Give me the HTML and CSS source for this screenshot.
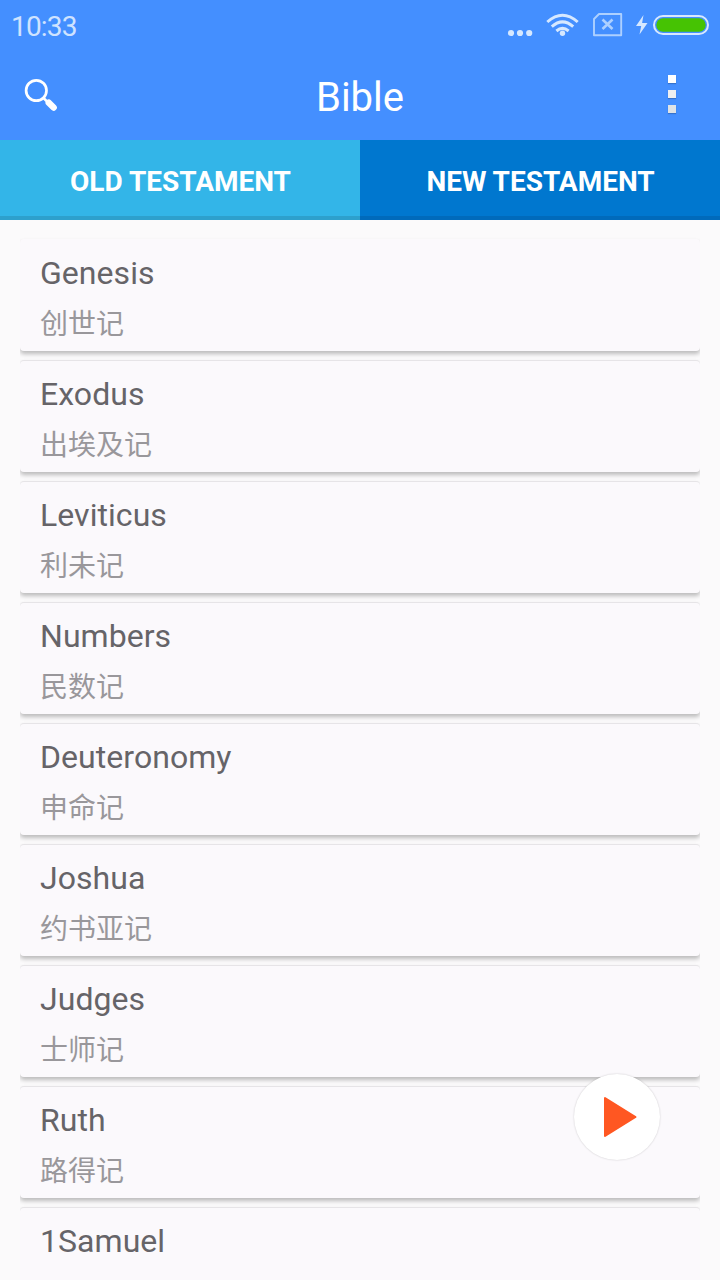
FILE: index.html
```html
<!DOCTYPE html>
<html lang="en">
<head>
<meta charset="utf-8">
<title>Bible</title>
<link rel="stylesheet" href="styles.css">
</head>
<body>
<div class="screen">
  <header class="top">
    <div class="status">
      <span class="clock">10:33</span>
      <svg class="indicators" width="206" height="30" viewBox="504 10 206 30">
        <g fill="#d6e8ff"><circle cx="511" cy="33" r="3.1"/><circle cx="520" cy="33" r="3.1"/><circle cx="529.200" cy="33" r="3.1"/><circle cx="562.5" cy="33.200" r="2.7"/></g>
        <g fill="none" stroke="#d6e8ff" stroke-width="3"><path d="M547.3 22q15.200-13.600 30.400 0"/><path d="M551.800 26.600q10.700-9.400 21.400 0"/><path d="M556.400 31q6.100-5.200 12.200 0"/></g>
        <path d="M599 14H621.200V35.200H594V19Z" fill="none" stroke="#add0ff" stroke-width="1.900" stroke-linejoin="round"/>
        <path d="M602.500 19.500l10 9.500M612.500 19.500l-10 9.500" stroke="#add0ff" stroke-width="2.600"/>
        <path d="M643.500 15L636 26h5.200L639.500 34.500L647.500 23h-5.400Z" fill="#d6e8ff"/>
        <rect x="654" y="16" width="54" height="18" rx="9" fill="none" stroke="#d6e8ff" stroke-width="2"/>
        <rect x="656.300" y="18.300" width="49.400" height="13.400" rx="6.700" fill="#46c303"/>
      </svg>
    </div>
    <div class="appbar">
      <svg class="search" width="40" height="40" viewBox="20 76 40 40" fill="none" stroke="#fff">
        <circle cx="36.300" cy="90.500" r="10.200" stroke-width="2.700"/><path d="M43.500 98l4 4" stroke-width="2.500"/><path d="M48.800 102.800l4.800 4.700" stroke-width="6.500" stroke-linecap="round"/>
      </svg>
      <h1 class="title">Bible</h1>
      <div class="more"><i class="dot"></i><i class="dot dot-mid"></i><i class="dot dot-low"></i></div>
    </div>
  </header>
  <nav class="tabs"><div class="tab tab-old">OLD TESTAMENT</div><div class="tab tab-new">NEW TESTAMENT</div></nav>
  <main class="list">
    <section class="card card-first"><div class="name">Genesis</div><div class="zh">创世记</div></section>
    <section class="card"><div class="name">Exodus</div><div class="zh">出埃及记</div></section>
    <section class="card"><div class="name">Leviticus</div><div class="zh">利未记</div></section>
    <section class="card"><div class="name">Numbers</div><div class="zh">民数记</div></section>
    <section class="card"><div class="name">Deuteronomy</div><div class="zh">申命记</div></section>
    <section class="card"><div class="name">Joshua</div><div class="zh">约书亚记</div></section>
    <section class="card"><div class="name">Judges</div><div class="zh">士师记</div></section>
    <section class="card"><div class="name">Ruth</div><div class="zh">路得记</div></section>
    <section class="card"><div class="name">1Samuel</div></section>
  </main>
  <div class="play">
    <svg width="86" height="86" viewBox="574 1074 86 86"><path d="M605 1098v38l30.500-19Z" fill="#ff5722" stroke="#ff5722" stroke-width="2" stroke-linejoin="round"/></svg>
  </div>
</div>
</body>
</html>
```
FILE: styles.css
```css
* { box-sizing: border-box; }
body { margin: 0; font-family: Roboto, "Noto Sans CJK SC", sans-serif; }
.screen { position: relative; width: 720px; height: 1280px; overflow: hidden; background: #fbfafb; display: flex; flex-direction: column; }
.top { height: 140px; flex: none; background: #448fff; }
.status { height: 50px; display: flex; justify-content: space-between; padding: 10px 10px 0 11px; }
.clock { font-size: 28px; line-height: 33px; color: #cfe3ff; letter-spacing: -0.8px; }
.appbar { height: 90px; display: grid; grid-template-columns: 100px 1fr 100px; }
.search { margin: 26px 0 0 20px; }
.title { margin: 0; font-size: 40px; font-weight: 400; line-height: 96px; color: #fff; text-align: center; }
.more { display: flex; flex-direction: column; gap: 7px; margin: 25px 0 0 48px; }
.dot { width: 8px; height: 8px; background: #fff; box-shadow: 0 1px 1px rgba(0, 0, 0, 0.2); }
.dot-mid { background: #eeeff0; }
.dot-low { background: #dfe3e6; }
.tabs { display: grid; grid-template-columns: 1fr 1fr; height: 80px; flex: none; }
.tab { height: 80px; padding-left: 1px; text-align: center; font-size: 28px; font-weight: 700; line-height: 84px; color: #fff; }
.tab-old { background: #33b5e8; box-shadow: inset 0 -4px #2da0cd; }
.tab-new { background: #0077cf; box-shadow: inset 0 -4px #006abb; }
.list { flex: 1; margin: 0 20px; padding-top: 19px; overflow: hidden; display: flex; flex-direction: column; gap: 10px; }
.card { flex: none; height: 112px; margin-bottom: -1px; padding: 14px 20px 0; border-radius: 4px; background: #fbf9fc; border-top: 1px solid #e6e4e7; box-shadow: 0 3px 4px rgba(0, 0, 0, 0.25); }
.card-first { border-top-color: transparent; }
.name { font-size: 32px; line-height: 38px; color: #666468; letter-spacing: 0.05px; }
.zh { margin-top: 12px; font-size: 28px; line-height: 42px; color: #99979b; }
.play { position: absolute; left: 574px; top: 1074px; width: 86px; height: 86px; border-radius: 50%; background: #fff; box-shadow: 0 0 2px rgba(0, 0, 0, 0.2); }
```
